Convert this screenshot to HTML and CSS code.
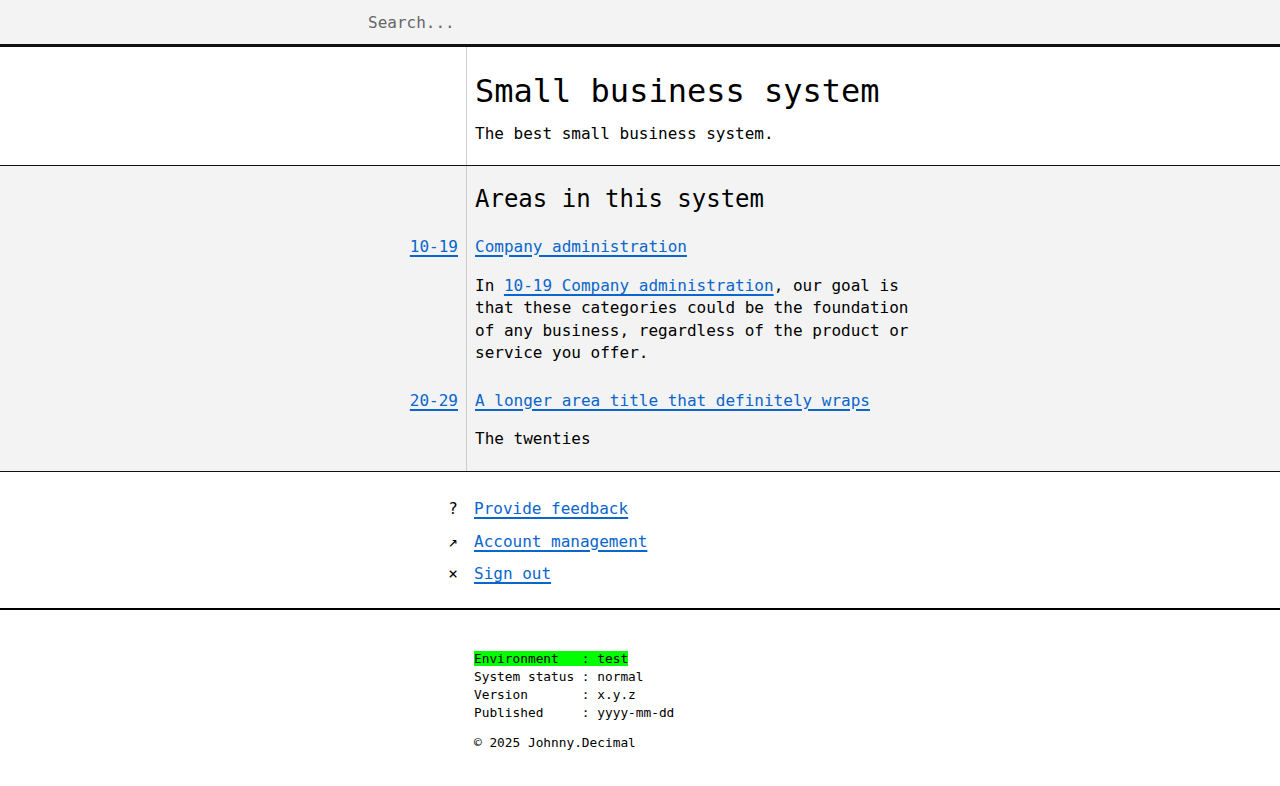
FILE: index.html
```html
<!DOCTYPE html>
<html lang="en">
<head>
<meta charset="utf-8">
<title>Small business system</title>
<link rel="stylesheet" href="styles.css">
</head>
<body>
<header class="topbar">
  <input class="search" type="text" placeholder="Search...">
</header>
<main>
  <section class="band intro">
    <div class="row row-h1">
      <div class="num"></div>
      <div class="body">
        <h1 class="title">Small business system</h1>
      </div>
    </div>
    <div class="row row-lead">
      <div class="num"></div>
      <div class="body"><p class="text">The best small business system.</p></div>
    </div>
  </section>
  <section class="band areas">
    <div class="row row-h2">
      <div class="num"></div>
      <div class="body"><h2 class="subtitle">Areas in this system</h2></div>
    </div>
    <div class="row row-area">
      <div class="num"><a href="#">10-19</a></div>
      <div class="body"><a href="#">Company administration</a></div>
    </div>
    <div class="row row-desc">
      <div class="num"></div>
      <div class="body"><p class="text">In <a href="#">10-19 Company administration</a>, our goal is that these categories could be the foundation of any business, regardless of the product or service you offer.</p></div>
    </div>
    <div class="row row-area row-area-next">
      <div class="num"><a href="#">20-29</a></div>
      <div class="body"><a href="#">A longer area title that definitely wraps</a></div>
    </div>
    <div class="row row-desc row-last">
      <div class="num"></div>
      <div class="body"><p class="text">The twenties</p></div>
    </div>
  </section>
  <nav class="links">
    <ul class="link-list">
      <li class="link-item"><span class="icon">?</span><a href="#">Provide feedback</a></li>
      <li class="link-item"><span class="icon">↗</span><a href="#">Account management</a></li>
      <li class="link-item"><span class="icon">×</span><a href="#">Sign out</a></li>
    </ul>
  </nav>
</main>
<footer class="foot">
  <div class="foot-inner">
<pre class="status"><span class="env">Environment   : test</span>
System status : normal
Version       : x.y.z
Published     : yyyy-mm-dd</pre>
    <p class="copy">© 2025 Johnny.Decimal</p>
  </div>
</footer>
</body>
</html>
```

FILE: styles.css
```css
* { box-sizing: border-box; }

html, body {
  margin: 0;
  padding: 0;
  background: #fff;
  color: #000;
  font-family: "DejaVu Sans Mono", "Liberation Mono", monospace;
  font-size: 16px;
  line-height: 1.4;
}

a {
  color: #0a66cc;
  text-decoration: underline;
  text-underline-offset: 3px;
  text-decoration-thickness: 2px;
}

.topbar {
  height: 47px;
  background: #f3f3f3;
  border-bottom: 3px solid #111;
  display: flex;
  align-items: center;
  padding-left: 368px;
  padding-top: 2px;
}

.search {
  border: 0;
  background: transparent;
  font: inherit;
  font-size: 16px;
  color: #000;
  padding: 0;
  margin: 0;
  width: 400px;
  outline: none;
}
.search::placeholder { color: #666; }

.band { border-bottom: 1px solid #111; }
.areas { background: #f3f3f3; }

.row {
  display: grid;
  grid-template-columns: 467px 1fr;
  --pt: 0px;
  --pb: 0px;
}
.row > .num {
  border-right: 1px solid #ccc;
  padding: var(--pt) 8px var(--pb) 0;
  text-align: right;
}
.row > .body {
  padding: var(--pt) 0 var(--pb) 8px;
  max-width: 450px;
}

.row-h1 { --pt: 25px; }
.row-lead { --pt: 13px; --pb: 19px; }
.row-h2 { --pt: 19px; }
.row-area { --pt: 22px; }
.row-area-next { --pt: 25px; }
.row-desc { --pt: 17px; }
.row-desc.row-last { --pt: 16px; --pb: 21px; }

.title {
  margin: 0;
  font-size: 32px;
  font-weight: normal;
  line-height: 1.2;
}
.subtitle {
  margin: 0;
  font-size: 24px;
  font-weight: normal;
  line-height: 1.2;
}
.text { margin: 0; }

.links { padding: 26px 0 23px; }
.link-list {
  list-style: none;
  margin: 0;
  padding: 0;
  display: flex;
  flex-direction: column;
  gap: 10px;
}
.link-item {
  display: grid;
  grid-template-columns: 466px 1fr;
}
.icon {
  text-align: right;
  padding-right: 8px;
}
.link-item a { margin-left: 8px; justify-self: start; }

.foot { border-top: 2px solid #000; }
.foot-inner {
  padding: 40px 0 30px 474px;
  font-size: 12.8px;
  line-height: 18px;
}
.status {
  margin: 0;
  font: inherit;
}
.env { background: #00ff00; }
.copy { margin: 12px 0 0; }
```
